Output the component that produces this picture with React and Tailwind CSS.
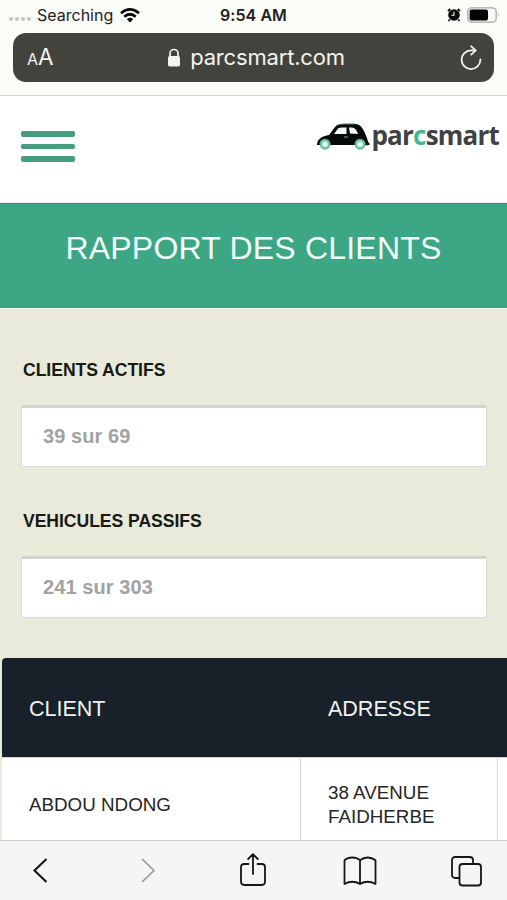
const stats = [
  { label: 'CLIENTS ACTIFS', value: '39 sur 69' },
  { label: 'VEHICULES PASSIFS', value: '241 sur 303' },
];

const StatusBar = () => (
  <div className="grid h-[33px] grid-cols-3 items-center px-2 pb-[3px] font-['Inter',sans-serif] text-[16px] text-[#222]">
    <div className="flex items-center">
      <div className="ml-[1px] mr-[6px] mt-[7px] flex gap-[2px]">
        {[0, 1, 2, 3].map((dot) => (
          <span key={dot} className="h-1 w-1 rounded-full bg-[#c5c5c1]" />
        ))}
      </div>
      <span>Searching</span>
      <svg className="ml-[7px] h-[15px] w-5" viewBox="0 0 20 15" fill="none" stroke="#080808" strokeWidth="2.7">
        <path d="M1 5.2Q10-2.4 19 5.2" />
        <path d="M4.2 8.7Q10 3.8 15.8 8.7" />
        <path d="M6.8 11.3Q10 8.4 13.2 11.3L10 14.6Z" fill="#080808" stroke="none" />
      </svg>
    </div>
    <span className="text-center font-semibold tracking-[0.05px]">9:54 AM</span>
    <div className="-mr-[1px] flex items-center justify-end">
      <svg className="mr-[6px] h-[14px] w-[14px]" viewBox="0 0 14 14" fill="none">
        <path d="M1 3.2 3.2 1M10.8 1 13 3.2M2.8 11.5 1.4 13M11.2 11.5l1.4 1.5" stroke="#080808" strokeWidth="1.8" />
        <circle cx="7" cy="7" r="5.8" fill="#080808" />
        <path d="M7 3.8V7.2H4.3" stroke="#fff" strokeWidth="1.1" />
      </svg>
      <svg className="h-4 w-[33px]" viewBox="0 0 33 16">
        <rect x="0.8" y="0.8" width="28.4" height="14.4" rx="4" fill="none" stroke="#a7a7a4" strokeWidth="1.3" />
        <rect x="2.6" y="2.6" width="18.4" height="10.8" rx="2" fill="#050505" />
        <path d="M31 5.5q1.5 2.5 0 5z" fill="#a7a7a4" />
      </svg>
    </div>
  </div>
);

const AddressBar = () => (
  <div className="mx-[13px] flex h-[49px] items-center justify-between rounded-[13px] bg-[#42433c] pl-[14px] pr-[12px] font-['Inter',sans-serif] text-[#f4f4ee]">
    <div className="flex w-9 items-baseline leading-none">
      <span className="text-[16px]">A</span>
      <span className="text-[22.5px]">A</span>
    </div>
    <div className="flex items-center pl-[3px]">
      <svg className="mr-[9px] h-[19px] w-[14px]" viewBox="0 0 14 19">
        <path d="M3 9V5.5a4 4 0 0 1 8 0V9" fill="none" stroke="currentColor" strokeWidth="1.7" />
        <rect x="1" y="8" width="12" height="10.5" rx="1.8" fill="currentColor" />
      </svg>
      <span className="text-[22px] tracking-[-0.18px]">parcsmart.com</span>
    </div>
    <div className="flex w-9 justify-end">
      <svg className="h-[26px] w-[22px]" viewBox="0 0 22 26" fill="none" stroke="currentColor" strokeWidth="1.8" strokeLinecap="round" strokeLinejoin="round">
        <path d="M20.4 14.5A9.4 9.4 0 1 1 11 5.3h4.3" />
        <path d="m11.2 1.3 4.5 4.1-4.5 4.2" />
      </svg>
    </div>
  </div>
);

const Logo = () => (
  <div className="flex items-start">
    <svg className="mt-[1px] h-[30px] w-[55px]" viewBox="0 0 55 30">
      <path d="M1 22C1 16 6 13 13 12L19 4Q21 1 28 1H39C46 1 48 8 51 15Q52 20 54 21Q53 23 49 22H6Z" fill="#080909" />
      <path d="M20 3Q22 1 28 1H39" fill="none" stroke="#4d766b" strokeWidth="1" />
      <path d="M18 11 22 5.5q1-1 4-1h4.5V11ZM33 4.5h3q4 0 6 6.5l-8-.5Z" fill="#f7fcfa" />
      <path d="M28 14h4" stroke="#90a49b" strokeWidth="1" />
      <g fill="#b9eadb" stroke="#62b99d" strokeWidth="2.2">
        <circle cx="9" cy="21.2" r="4.4" />
        <circle cx="44" cy="21.2" r="4.4" />
      </g>
      <circle cx="9" cy="21.2" r="1.8" fill="#fff" />
      <circle cx="44" cy="21.2" r="1.8" fill="#fff" />
    </svg>
    <span className="font-['Open_Sans',sans-serif] text-[26px] font-bold leading-[26px] tracking-[-0.78px] text-[#414144]">
      par<span className="text-[#42b692]">c</span>smart
    </span>
  </div>
);

const SiteHeader = () => (
  <header className="flex h-[108px] items-start justify-between border-t border-[#d7d7d4] bg-white pl-[21px] pr-[8px]">
    <button className="mt-[35px] flex w-[54px] flex-col gap-[7px]" aria-label="Menu">
      <span className="h-[5.5px] w-full rounded-[2px] bg-[#459d7e]" />
      <span className="h-[5.5px] w-full rounded-[2px] bg-[#459d7e]" />
      <span className="h-[5.5px] w-full rounded-[2px] bg-[#459d7e]" />
    </button>
    <div className="mt-[26px]">
      <Logo />
    </div>
  </header>
);

const StatField = ({ label, value }) => (
  <div className="h-[151px]">
    <p className="text-[17.6px] font-bold leading-6 tracking-[-0.05px] text-[#191a17]">{label}</p>
    <div className="-ml-[2px] mt-[23px] flex h-[62px] items-center rounded-[3px] border border-t-[3px] border-[#dcddd4] border-t-[#d3d4ce] bg-white pb-[2px] pl-[21px] text-[20px] font-bold tracking-[0.08px] text-[#a2a2a2]">
      {value}
    </div>
  </div>
);

const ClientsTable = () => (
  <div className="ml-[2px] grid grid-cols-[299px_197px_1fr]">
    <div className="flex h-[99px] items-center rounded-tl-[4px] border-r border-[#211d26] bg-[#18202a] pl-[27px] pt-[3px] text-[21.5px] text-[#f0f2f4]">CLIENT</div>
    <div className="flex items-center border-r border-[#211d26] bg-[#18202a] pl-[27px] pt-[3px] text-[21.5px] text-[#f0f2f4]">ADRESSE</div>
    <div className="bg-[#18202a]" />
    <div className="flex h-[95px] items-center border-r border-t border-[#d5d5d3] bg-white pl-[27px] text-[18.8px] text-[#252525]">ABDOU NDONG</div>
    <div className="flex items-center border-r border-t border-[#d5d5d3] bg-white pl-[27px] text-[18.8px] leading-6 text-[#252525]">
      <span>38 AVENUE<br />FAIDHERBE</span>
    </div>
    <div className="border-t border-[#d5d5d3] bg-white" />
  </div>
);

const BrowserToolbar = () => (
  <nav className="-mx-[13px] grid h-[60px] shrink-0 grid-cols-5 items-start justify-items-center border-t border-[#cecece] bg-[#f5f5f5] pt-3 text-[#161616]">
    <svg className="mt-[4px] h-[26px] w-[17px]" viewBox="0 0 17 26" fill="none" stroke="currentColor" strokeWidth="2.1">
      <path d="M14.5 2 2.5 13.5l12 11.5" />
    </svg>
    <svg className="ml-[4px] mt-[4px] h-[26px] w-[17px] text-[#999]" viewBox="0 0 17 26" fill="none" stroke="currentColor" strokeWidth="1.7">
      <path d="m2 2 12 11.5L2 25" />
    </svg>
    <svg className="h-[34px] w-[28px]" viewBox="0 0 28 34" fill="none" stroke="currentColor" strokeWidth="1.8" strokeLinecap="round" strokeLinejoin="round">
      <path d="M9.5 11H5.3Q2 11 2 14v14.8Q2 32 5.3 32h17.4Q26 32 26 28.8V14q0-3-3.3-3h-4.2M14 21V1.2M9.2 6 14 1.2 18.8 6" />
    </svg>
    <svg className="mt-[3px] h-[30px] w-[34px]" viewBox="0 0 34 30" fill="none" stroke="currentColor" strokeWidth="1.8" strokeLinejoin="round">
      <path d="M17 4.2Q14 1.5 9.3 1.5T1.5 4.2V28Q9.3 23.5 17 28Q24.7 23.5 32.5 28V4.2Q29 1.5 24.7 1.5T17 4.2V28" />
    </svg>
    <svg className="mt-[2px] h-[32px] w-[33px]" viewBox="0 0 33 32" fill="none" stroke="currentColor" strokeWidth="1.8">
      <path d="M10 23H5.3Q2 23 2 19.7V5.3Q2 2 5.3 2h14.4Q23 2 23 5.3V9" />
      <rect x="9.5" y="9" width="21.5" height="21.5" rx="3" />
    </svg>
  </nav>
);

export default function App() {
  return (
    <div className="flex h-[900px] w-full flex-col overflow-hidden bg-[#fbfbf8] font-['Liberation_Sans',Arial,sans-serif]">
      <StatusBar />
      <AddressBar />
      <div className="h-[13px] shrink-0" />
      <SiteHeader />
      <main className="min-h-0 flex-1 overflow-hidden bg-[#e9eada]">
        <div className="flex h-[106px] items-start justify-center border-b border-t border-b-[#f5f7ee] border-t-[#318a6c] bg-[#3ca685] pt-[26px]">
          <h1 className="text-[32px] leading-9 tracking-[0.2px] text-[#f2fff9]">RAPPORT DES CLIENTS</h1>
        </div>
        <div className="-mb-[2px] pl-[23px] pr-[20px] pt-[49px]">
          {stats.map((stat) => (
            <StatField key={stat.label} {...stat} />
          ))}
        </div>
        <ClientsTable />
      </main>
      <BrowserToolbar />
    </div>
  );
}
